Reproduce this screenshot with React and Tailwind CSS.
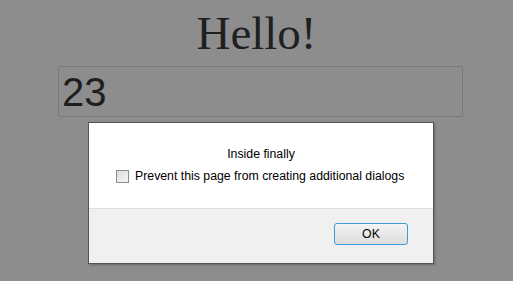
import React from 'react';

export default function App() {
    return (
        <div className="relative w-[513px] h-[281px] overflow-hidden bg-[#8d8d8d]">
            <h1
                className="pt-[10px] h-[56px] text-center text-[47px] leading-none text-[#1f1f1f]"
                style={{ fontFamily: '"Liberation Serif", "Times New Roman", serif' }}
            >
                Hello!
            </h1>
            <div className="mt-[10px] ml-[58px] w-[405px] h-[51px] border border-[#7a7a7a] rounded-[2px] pt-[5px] pl-[3px]">
                <span
                    className="block text-[40px] leading-none text-[#1e1e1e]"
                    style={{ fontFamily: '"Liberation Sans", Arial, sans-serif' }}
                >
                    23
                </span>
            </div>

            <Dialog />
        </div>
    );
}

function Dialog() {
    return (
        <div
            className="absolute left-[88px] top-[122px] w-[346px] h-[142px] flex flex-col border border-[#555] bg-white shadow-[1px_1px_2px_rgba(0,0,0,0.25)] text-[12.3px] text-black"
            style={{ fontFamily: '"Liberation Sans", Arial, sans-serif' }}
        >
            <div className="h-[85px] flex flex-col items-center pt-[24px]">
                <p className="leading-[14px]">Inside finally</p>
                <label className="mt-[8px] self-start ml-[27px] flex items-center gap-[6px]">
                    <span className="w-[13px] h-[13px] border border-[#8e8e8e] bg-gradient-to-br from-[#dcdcdc] to-[#f6f6f6]" />
                    <span className="leading-[14px]">Prevent this page from creating additional dialogs</span>
                </label>
            </div>
            <div className="flex-1 border-t border-[#dfdfdf] bg-[#f0f0f0] flex justify-end items-start pt-[14px] pr-[25px]">
                <button className="w-[74px] h-[22px] rounded-[3px] border border-[#3d9bd8] bg-gradient-to-b from-[#f4f4f4] to-[#dddddd] text-[12.3px] leading-none text-black">
                    OK
                </button>
            </div>
        </div>
    );
}
